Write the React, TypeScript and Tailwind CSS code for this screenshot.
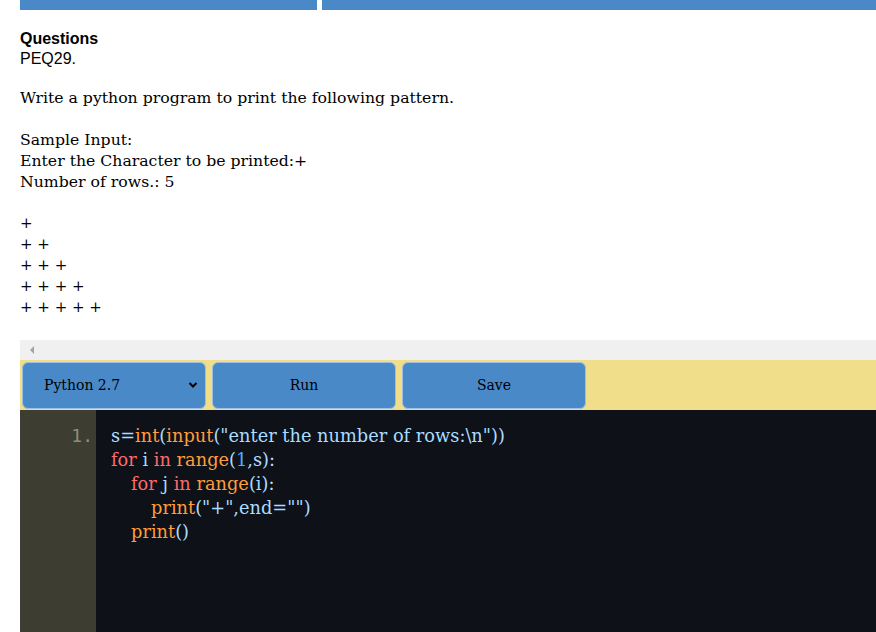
import React from 'react';

const serif = { fontFamily: '"DejaVu Serif", serif' };

const Kw = ({ children }: { children: React.ReactNode }) => <span className="text-[#ff6b6b]">{children}</span>;
const Fn = ({ children }: { children: React.ReactNode }) => <span className="text-[#ff9d3c]">{children}</span>;
const Id = ({ children }: { children: React.ReactNode }) => <span className="text-[#a9dcff]">{children}</span>;
const Num = ({ children }: { children: React.ReactNode }) => <span className="text-[#4fb0ff]">{children}</span>;
const Pn = ({ children }: { children: React.ReactNode }) => <span className="text-[#d8dde4]">{children}</span>;

export default function App() {
  return (
    <div className="w-[876px] h-[632px] overflow-hidden bg-white pl-5">
      {/* top tab strip, cut off */}
      <div className="flex h-[10px] gap-[5px]">
        <div className="w-[297px] bg-[#4a89c8]" />
        <div className="flex-1 bg-[#4a89c8]" />
      </div>

      <div className="pt-[18px]">
        <div className="text-[16px] font-bold leading-[21px] text-black" style={{ fontFamily: '"Liberation Sans", Arial, sans-serif' }}>
          Questions
        </div>
        <div className="text-[16px] leading-[19px] text-black" style={{ fontFamily: '"Liberation Sans", Arial, sans-serif' }}>
          PEQ29.
        </div>
      </div>

      <div className="mt-[19px] text-[15.7px] leading-[21px] text-black" style={serif}>
        <p>Write a python program to print the following pattern.</p>
        <p className="mt-[21px]">Sample Input:</p>
        <p>Enter the Character to be printed:+</p>
        <p>Number of rows.: 5</p>
        <div className="mt-[21px] text-[15px]">
          <p>+</p>
          <p>+ +</p>
          <p>+ + +</p>
          <p>+ + + +</p>
          <p>+ + + + +</p>
        </div>
      </div>

      {/* horizontal scrollbar */}
      <div className="mt-[22px] h-[20px] bg-[#f0f0f0] flex items-center pl-[9px]">
        <svg width="6" height="8" viewBox="0 0 6 8">
          <path d="M5 0 L1 4 L5 8 Z" fill="#a3a3a3" />
        </svg>
      </div>

      {/* toolbar */}
      <div className="h-[50px] bg-[#f0de8a] flex items-center gap-[6px] pl-[2px]" style={serif}>
        <div className="w-[184px] h-[47px] rounded-[6px] bg-[#4a89c8] border border-[#9dbfe0] flex items-center justify-between pl-[21px] pr-[6px] text-[14px] text-black">
          <span>Python 2.7</span>
          <svg width="12" height="12" viewBox="0 0 12 12">
            <path d="M2.5 4 L6 7.5 L9.5 4" stroke="#000" strokeWidth="2" fill="none" />
          </svg>
        </div>
        <div className="w-[184px] h-[47px] rounded-[6px] bg-[#4a89c8] border border-[#9dbfe0] flex items-center justify-center text-[14px] text-black">
          Run
        </div>
        <div className="w-[184px] h-[47px] rounded-[6px] bg-[#4a89c8] border border-[#9dbfe0] flex items-center justify-center text-[14px] text-black">
          Save
        </div>
      </div>

      {/* editor */}
      <div className="flex h-[222px]">
        <div className="w-[76px] bg-[#3e3d32] pt-[14px] pr-[3px] text-right text-[18px] leading-[24px] text-[#8f8f77]" style={{ fontFamily: '"DejaVu Sans Mono", monospace' }}>
          1.
        </div>
        <div className="flex-1 bg-[#0e1118] pt-[14px] pl-[15px] text-[17.8px] leading-[24px] whitespace-pre" style={serif}>
          <div>
            <Id>s=</Id><Fn>int</Fn><Id>(</Id><Fn>input</Fn><Id>("enter the number of rows:\n"))</Id>
          </div>
          <div>
            <Kw>for</Kw> <Id>i</Id> <Kw>in</Kw> <Fn>range</Fn><Id>(</Id><Num>1</Num><Id>,s)</Id><Pn>:</Pn>
          </div>
          <div className="pl-[20px]">
            <Kw>for</Kw> <Id>j</Id> <Kw>in</Kw> <Fn>range</Fn><Id>(i)</Id><Pn>:</Pn>
          </div>
          <div className="pl-[40px]">
            <Fn>print</Fn><Id>("+",end="")</Id>
          </div>
          <div className="pl-[20px]">
            <Fn>print</Fn><Id>()</Id>
          </div>
        </div>
      </div>
    </div>
  );
}
